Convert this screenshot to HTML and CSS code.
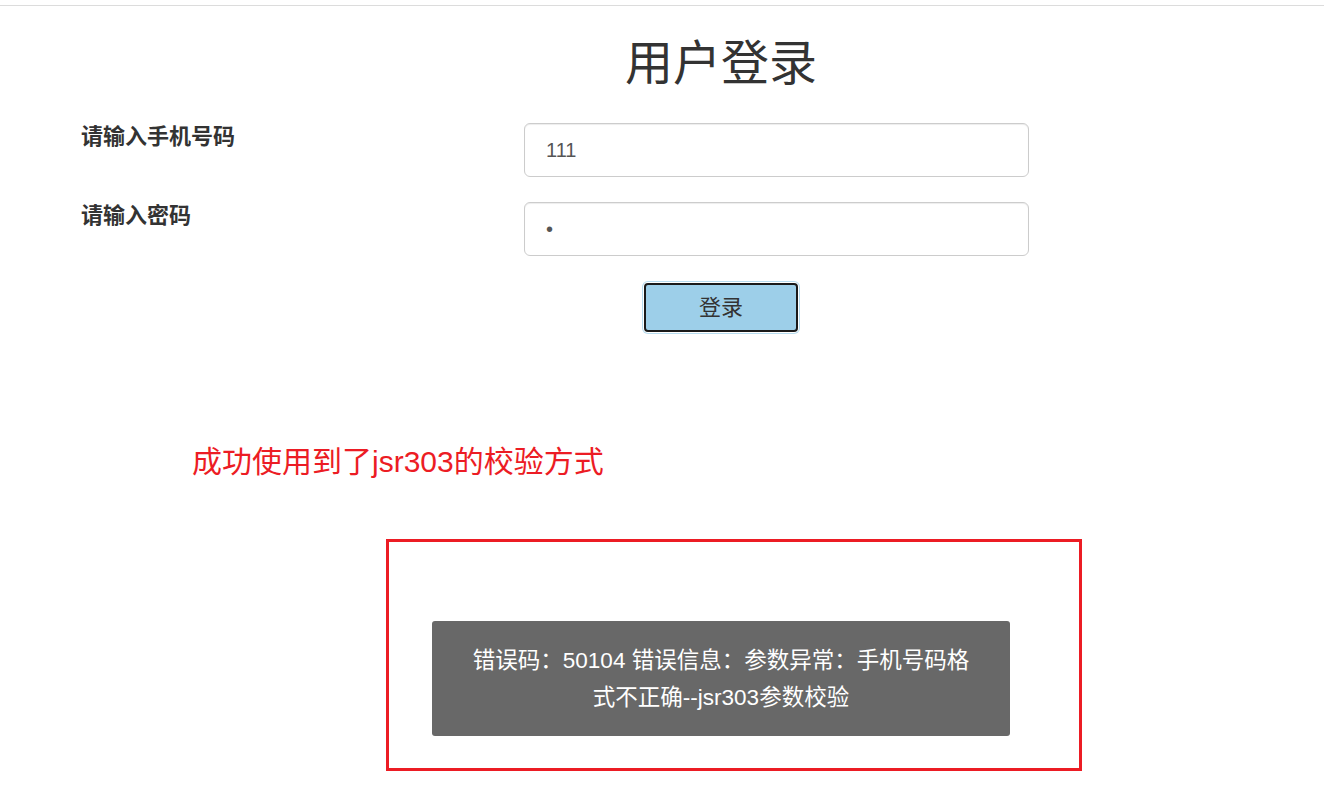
FILE: index.html
```html
<!DOCTYPE html>
<html lang="zh-CN">
<head>
<meta charset="utf-8">
<title>用户登录</title>
<link rel="stylesheet" href="styles.css">
</head>
<body>
<div class="topline"></div>
<h1 class="title">用户登录</h1>
<form class="login-form" onsubmit="return false">
  <div class="form-row">
    <label class="form-label" for="mobile">请输入手机号码</label>
    <input class="form-input" id="mobile" type="text" value="111">
  </div>
  <div class="form-row">
    <label class="form-label" for="password">请输入密码</label>
    <input class="form-input" id="password" type="password" value="1">
  </div>
  <div class="btn-row">
    <button class="btn-login" type="submit">登录</button>
  </div>
</form>
<p class="note">成功使用到了jsr303的校验方式</p>
<div class="result-box">
  <div class="toast">错误码：50104 错误信息：参数异常：手机号码格<br>式不正确--jsr303参数校验</div>
</div>
</body>
</html>
```

FILE: styles.css
```css
html, body {
  margin: 0;
  padding: 0;
  background: #fff;
}

body {
  font-family: "Liberation Sans", "Noto Sans CJK SC", sans-serif;
  color: #333;
}

.topline {
  margin-top: 5px;
  height: 1px;
  background: #dcdcdc;
}

.title {
  margin: 34px 0 0;
  padding-left: 118px;
  text-align: center;
  font-size: 48px;
  line-height: 47px;
  font-weight: normal;
  color: #333;
}

.login-form {
  margin-top: 36px;
  padding-left: 81px;
}

.form-row {
  display: flex;
  align-items: flex-start;
  margin-bottom: 25px;
}

.form-label {
  width: 443px;
  flex: none;
  font-size: 22px;
  line-height: 28px;
  font-weight: bold;
  color: #333;
}

.form-input {
  box-sizing: border-box;
  width: 505px;
  height: 54px;
  margin: 0;
  padding: 0 21px;
  border: 1px solid #cccccc;
  border-radius: 6px;
  box-shadow: inset 0 1px 1px rgba(0, 0, 0, 0.075);
  font-family: "Liberation Sans", "Noto Sans CJK SC", sans-serif;
  font-size: 20px;
  color: #555;
  background: #fff;
  outline: none;
}

.btn-row {
  margin-top: 27px;
  margin-left: -81px;
  padding-left: 118px;
  text-align: center;
}

.btn-login {
  box-sizing: border-box;
  width: 154px;
  height: 49px;
  margin: 0;
  padding: 0;
  border: 2px solid #1a1a1a;
  border-radius: 4px;
  background: #9dcfe9;
  box-shadow: 0 0 0 1px #ffffff, 0 0 0 2px #b7dcef;
  font-family: "Liberation Sans", "Noto Sans CJK SC", sans-serif;
  font-size: 22px;
  line-height: 28px;
  color: #333;
  cursor: pointer;
}

.note {
  margin: 110px 0 0;
  padding-left: 192px;
  font-size: 30px;
  line-height: 40px;
  color: #ec1c24;
}

.result-box {
  box-sizing: border-box;
  width: 696px;
  height: 232px;
  margin: 57px 0 0 386px;
  padding: 79px 0 0 43px;
  border: 3px solid #ec1c24;
}

.toast {
  box-sizing: border-box;
  width: 578px;
  height: 115px;
  padding-top: 21px;
  border-radius: 3px;
  background: #686868;
  color: #fff;
  font-size: 22.5px;
  line-height: 37px;
  text-align: center;
}
```
